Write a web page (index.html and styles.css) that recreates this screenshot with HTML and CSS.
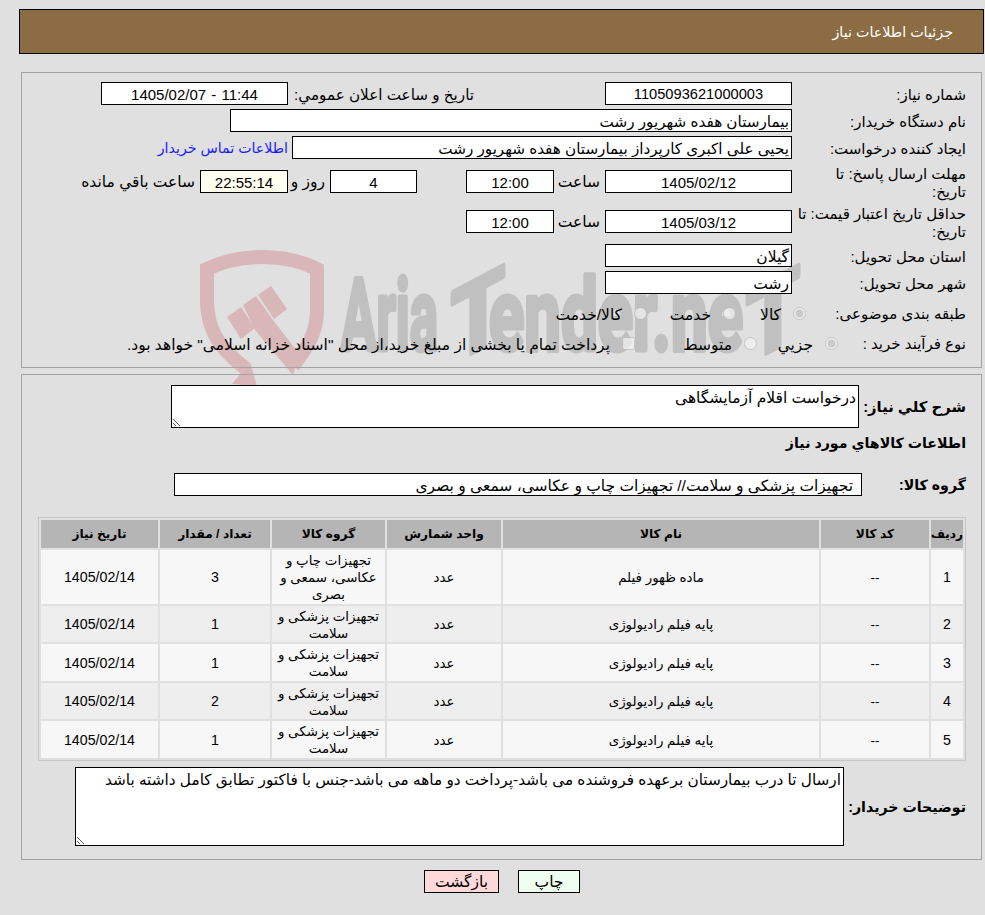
FILE: index.html
```html
<!DOCTYPE html>
<html lang="fa" dir="rtl">
<head>
<meta charset="utf-8">
<title>جزئیات اطلاعات نیاز</title>
<link rel="stylesheet" href="styles.css">
</head>
<body>
<svg class="watermark" width="985" height="400" viewBox="0 0 985 400" aria-hidden="true">
  <g class="wm-shield">
    <path class="wm-outline" d="M245 368C215 345 207 325 207 300L207 269C240 253 285 253 317 269L317 310C317 335 305 350 293 366"/>
    <polygon points="232,384 250,362 257,386"/>
    <polygon points="227,317 241,307 255,328 241,339"/>
    <polygon points="243,305 256,296 273,320 300,355 293,375 255,330"/>
    <polygon points="258,295 271,286 287,309 274,319"/>
  </g>
  <g class="wm-text">
    <text x="341" y="350" textLength="97" lengthAdjust="spacingAndGlyphs">Aria</text>
    <text x="451" y="350" textLength="54" lengthAdjust="spacingAndGlyphs" transform="translate(0 254) skewY(-28)">T</text>
    <text x="489" y="350" textLength="254" lengthAdjust="spacingAndGlyphs">ender.ne</text>
    <text x="746" y="350" textLength="54" lengthAdjust="spacingAndGlyphs" transform="translate(0 411) skewY(-28)">T</text>
  </g>
</svg>

<header class="title-bar">جزئیات اطلاعات نیاز</header>

<section class="panel panel-info">
  <div class="row">
    <div class="lbl">شماره نیاز:</div>
    <div class="field f-main center id-number">1105093621000003</div>
    <div class="lbl lbl-announce">تاریخ و ساعت اعلان عمومي:</div>
    <div class="field f-main center">11:44 - 1405/02/07</div>
  </div>
  <div class="row">
    <div class="lbl">نام دستگاه خریدار:</div>
    <div class="field f-buyer">بیمارستان هفده شهریور رشت</div>
  </div>
  <div class="row">
    <div class="lbl">ایجاد کننده درخواست:</div>
    <div class="field f-creator">یحیی علی اکبری کارپرداز بیمارستان هفده شهریور رشت</div>
    <a class="contact" href="#">اطلاعات تماس خریدار</a>
  </div>
  <div class="row row-deadline">
    <div class="lbl">مهلت ارسال پاسخ: تا<br>تاریخ:</div>
    <div class="field f-main center">1405/02/12</div>
    <div class="unit">ساعت</div>
    <div class="field f-small center">12:00</div>
    <div class="gap-days"></div>
    <div class="field f-days center">4</div>
    <div class="unit unit-day">روز و</div>
    <div class="field f-small center remain">22:55:14</div>
    <div class="unit unit-left">ساعت باقي مانده</div>
  </div>
  <div class="row row-valid">
    <div class="lbl">حداقل تاریخ اعتبار قیمت: تا<br>تاریخ:</div>
    <div class="field f-main center">1405/03/12</div>
    <div class="unit">ساعت</div>
    <div class="field f-small center">12:00</div>
  </div>
  <div class="row row-province">
    <div class="lbl">استان محل تحویل:</div>
    <div class="field f-main">گیلان</div>
  </div>
  <div class="row">
    <div class="lbl">شهر محل تحویل:</div>
    <div class="field f-main">رشت</div>
  </div>
  <div class="row row-subject">
    <div class="lbl lbl-subject">طبقه بندی موضوعی:</div>
    <label class="opt opt-70"><input type="radio" name="subject" checked disabled><span>کالا</span></label>
    <label class="opt opt-89"><input type="radio" name="subject" disabled><span>خدمت</span></label>
    <label class="opt"><input type="radio" name="subject" disabled><span>کالا/خدمت</span></label>
  </div>
  <div class="row row-process">
    <div class="lbl lbl-process">نوع فرآیند خرید :</div>
    <label class="opt opt-81"><input type="radio" name="process" checked disabled><span>جزيي</span></label>
    <label class="opt opt-122"><input type="radio" name="process" disabled><span>متوسط</span></label>
    <label class="opt"><input type="checkbox" disabled><span>پرداخت تمام یا بخشی از مبلغ خرید،از محل "اسناد خزانه اسلامی" خواهد بود.</span></label>
  </div>
</section>

<section class="panel panel-goods">
  <div class="row-desc">
    <div class="lbl-bold">شرح كلي نياز:</div>
    <textarea class="area area-desc" readonly>درخواست اقلام آزمایشگاهی</textarea>
  </div>
  <h2 class="section-title">اطلاعات كالاهاي مورد نياز</h2>
  <div class="row-group">
    <div class="lbl-bold lbl-group">گروه کالا:</div>
    <div class="field f-group">تجهیزات پزشکی و سلامت// تجهیزات چاپ و عکاسی، سمعی و بصری</div>
  </div>
  <table class="goods">
    <colgroup>
      <col class="c-row"><col class="c-code"><col class="c-name"><col class="c-unit"><col class="c-group"><col class="c-qty"><col class="c-date">
    </colgroup>
    <thead>
      <tr><th>ردیف</th><th>کد کالا</th><th>نام کالا</th><th>واحد شمارش</th><th>گروه کالا</th><th>تعداد / مقدار</th><th>تاریخ نیاز</th></tr>
    </thead>
    <tbody>
      <tr class="tall"><td>1</td><td>--</td><td>ماده ظهور فیلم</td><td>عدد</td><td>تجهیزات چاپ و عکاسی، سمعی و بصری</td><td>3</td><td>1405/02/14</td></tr>
      <tr><td>2</td><td>--</td><td>پایه فیلم رادیولوژی</td><td>عدد</td><td>تجهیزات پزشکی و سلامت</td><td>1</td><td>1405/02/14</td></tr>
      <tr class="taller"><td>3</td><td>--</td><td>پایه فیلم رادیولوژی</td><td>عدد</td><td>تجهیزات پزشکی و سلامت</td><td>1</td><td>1405/02/14</td></tr>
      <tr><td>4</td><td>--</td><td>پایه فیلم رادیولوژی</td><td>عدد</td><td>تجهیزات پزشکی و سلامت</td><td>2</td><td>1405/02/14</td></tr>
      <tr class="taller"><td>5</td><td>--</td><td>پایه فیلم رادیولوژی</td><td>عدد</td><td>تجهیزات پزشکی و سلامت</td><td>1</td><td>1405/02/14</td></tr>
    </tbody>
  </table>
  <div class="row-notes">
    <div class="lbl-bold lbl-notes">توضیحات خریدار:</div>
    <textarea class="area area-notes" readonly>ارسال تا درب بیمارستان برعهده فروشنده می باشد-پرداخت دو ماهه می باشد-جنس با فاکتور تطابق کامل داشته باشد</textarea>
  </div>
</section>

<div class="actions">
  <button class="btn btn-print" type="button">چاپ</button>
  <button class="btn btn-back" type="button">بازگشت</button>
</div>
</body>
</html>
```

FILE: styles.css
```css
* { box-sizing: border-box; }
html, body { margin: 0; padding: 0; }
body {
  position: relative;
  width: 985px;
  height: 915px;
  overflow: hidden;
  background: #e0e0e0;
  color: #000;
  font-family: "Liberation Sans", "DejaVu Sans", sans-serif;
  font-size: 15.5px;
  line-height: 18px;
}
.watermark { position: absolute; left: 0; top: 0; z-index: 0; }
.wm-shield { fill: #d9b6b7; }
.wm-outline { fill: none; stroke: #d9b6b7; stroke-width: 14; }
.wm-text {
  fill: #c0c0c0;
  stroke: #c0c0c0;
  stroke-width: 5;
  stroke-linejoin: round;
  font-family: Roboto, sans-serif;
  font-weight: 700;
  font-size: 100px;
  direction: ltr;
}

.title-bar, .panel, .actions { position: relative; z-index: 1; }

.title-bar {
  margin: 9px 1px 0 19px;
  height: 45px;
  padding: 0 30px;
  display: flex;
  align-items: center;
  background: #8c6c42;
  border: 1px solid #000;
  color: #fff;
  font-size: 14.3px;
}
.panel {
  margin: 0 3px 0 21px;
  border: 1px solid #a3a3a3;
}
.panel-info { height: 296px; margin-top: 18px; padding: 9px 15px 0 0; }
.panel-goods { height: 486px; margin-top: 6px; padding: 10px 15px 0 0; }

.row { display: flex; align-items: center; height: 23px; margin-bottom: 4px; }
.row-deadline { margin-top: 11px; margin-bottom: 17px; }
.row-valid { margin-bottom: 11px; }
.row-subject { height: 24px; margin-top: 7px; margin-bottom: 6px; }
.row-process { height: 24px; }

.lbl { width: 174px; flex: none; padding-top: 2px; font-size: 15px; white-space: nowrap; }
.lbl-announce { width: 317px; padding-right: 131px; font-size: 15.2px; }
.lbl-subject { width: 160px; }
.lbl-process { width: 128px; }

.field {
  flex: none;
  height: 23px;
  padding: 0 2px;
  background: #fff;
  border: 1px solid #000;
  line-height: 23px;
  white-space: nowrap;
  overflow: hidden;
}
.center { text-align: center; font-size: 15px; word-spacing: 1px; }
.id-number { font-size: 14.67px; }
.f-main { width: 187px; }
.f-small { width: 88px; }
.f-days { width: 87px; }
.f-buyer { width: 562px; font-size: 15.2px; }
.f-creator { width: 500px; font-size: 15.2px; }
.remain { background: #fffff0; }
.contact { margin-right: 4px; color: #1a1aff; font-size: 14.2px; text-decoration: none; white-space: nowrap; }
.unit { width: 51px; flex: none; padding-right: 5px; white-space: nowrap; }
.gap-days { width: 49px; flex: none; }
.unit-day { width: 42px; }
.unit-left { width: auto; }

.opt { display: flex; align-items: center; flex: none; white-space: nowrap; }
.opt input { width: 13px; height: 13px; margin: 0 0 0 12px; flex: none; }
.opt span { padding-top: 3px; }
.opt-70 { width: 70px; }
.opt-89 { width: 89px; }
.opt-81 { width: 81px; }
.opt-122 { width: 122px; }

.lbl-bold { font-size: 14.2px; font-weight: 700; flex: none; white-space: nowrap; }
.row-desc { display: flex; align-items: center; height: 43px; }
.row-desc .lbl-bold { width: 107px; font-size: 14.8px; }
.area {
  display: block;
  flex: none;
  margin: 0;
  padding: 3px 2px 2px;
  background: #fff;
  border: 1px solid #000;
  border-radius: 0;
  color: #000;
  font: inherit;
  line-height: 18px;
  resize: both;
  outline: none;
}
.area-desc { width: 688px; height: 43px; }
.section-title {
  margin: 6px 0 0;
  height: 18px;
  font-size: 14.2px;
  line-height: 18px;
  font-weight: 700;
}
.row-group { display: flex; align-items: center; height: 23px; margin-top: 21px; }
.lbl-group { width: 104px; }
.f-group { width: 688px; padding-right: 8px; }

.goods {
  direction: rtl;
  table-layout: fixed;
  width: 928px;
  margin: 21px 0 0;
  border: 1px solid #c6c6c6;
  border-spacing: 2px;
  border-collapse: separate;
  text-align: center;
}
.c-row { width: 32px; }
.c-code { width: 108px; }
.c-name { width: 316px; }
.c-unit { width: 114px; }
.c-group { width: 113px; }
.c-qty { width: 110px; }
.c-date { width: 117px; }
.goods th { height: 28px; padding: 0; background: #b5b5b5; font-size: 12.2px; font-weight: 700; white-space: nowrap; }
.goods td { height: 36px; padding: 1px 1px 0; background: #f7f7f7; font-size: 13.4px; line-height: 17px; }
.goods td:nth-child(1), .goods td:nth-child(6), .goods td:nth-child(7) { font-size: 14.2px; }
.goods .taller td { height: 37px; }
.goods .tall td { height: 54px; }
.goods tbody tr:nth-child(even) td { background: #eee; }

.row-notes { display: flex; align-items: center; height: 79px; margin-top: 6px; }
.lbl-notes { width: 122px; }
.area-notes { width: 769px; height: 79px; font-size: 15.3px; }

.actions {
  display: flex;
  justify-content: center;
  gap: 19px;
  margin-top: 10px;
  padding-left: 19px;
}
.btn {
  height: 23px;
  padding: 0;
  border: 1px solid #000;
  border-radius: 0;
  color: #000;
  font: inherit;
}
.btn-print { width: 62px; background: #efffef; }
.btn-back { width: 75px; background: #ffd9d9; }
```
